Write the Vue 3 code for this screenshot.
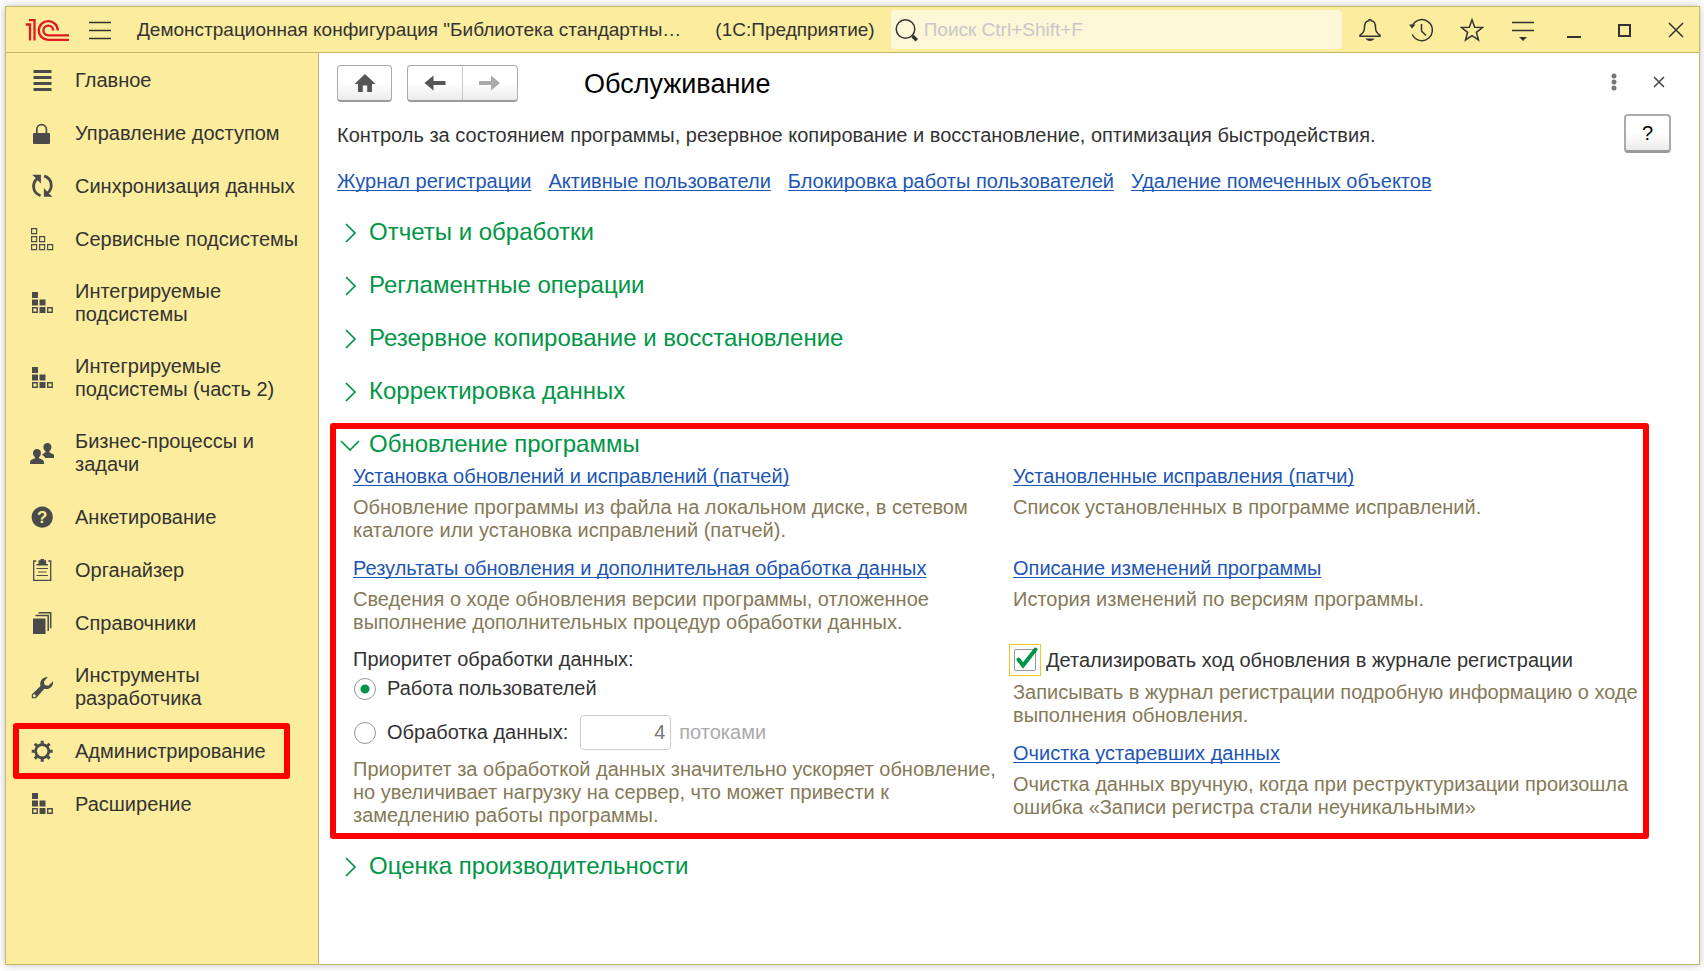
<script setup>
import { ref } from 'vue'

const f = (d) => ({ d, fill: 'currentColor', stroke: 'none', w: 0 })
const s = (d, w) => ({ d, fill: 'none', stroke: 'currentColor', w })

const blocks = [
  f('M2 1h6v6H2zM2 8.5h6v6H2zM9.5 8.5h6v6h-6zM9.5 16h6v6h-6z'),
  s('M2.7 16.7h4.5v4.5H2.7zM17.7 16.7h4.5v4.5h-4.5z', 1.4)
]

const icons = {
  list: [s('M3.5 3.5h18M3.5 9.5h18M3.5 15.5h18M3.5 21.5h18', 3)],
  lock: [f('M4 12h15a1 1 0 0 1 1 1v9a1 1 0 0 1-1 1H4a1 1 0 0 1-1-1v-9a1 1 0 0 1 1-1z'), s('M6.8 12.5V8.500a4.800 4.800 0 0 1 9.600 0v4', 1.7)],
  sync: [
    f('M2.3.8h8.600v8.700L8.200 6.700 5.900 4.200zM22.500 22.800h-8.600v-8.700l2.700 2.800 2.300 2.500z'),
    s('M7.200 4.600C2 9 1.800 18.600 10.600 21.700M17.600 19C22.800 14.600 23 5 14.200 1.900', 2.8)
  ],
  outline: [s('M1.6 1.6h5v5h-5zM1.6 9.6h5v5h-5zM9.6 9.6h5v5h-5zM1.6 17.6h5v5h-5zM9.6 17.6h5v5h-5zM17.6 17.6h5v5h-5z', 1.2)],
  blocks,
  people: [
    f('M17.4 2c2.600 0 4 1.800 4 4 0 2-.9 3.500-2 4.300v1.200l3.600 1.400c1 .4 1.400 1.500 1.400 4.100h-9.400c-.6-1.600-1.600-2.300-3-2.900 .3-.8 1-1.100 3.400-2.500V10.300c-1.100-.8-2-2.300-2-4.300 0-2.200 1.400-4 4-4z'),
    f('M7 8c2.600 0 4 1.800 4 4 0 2-.9 3.300-2 4.100v1.200l3.500 1.400c1 .4 1.500 1.600 1.500 4.300H0c0-2.700.5-3.900 1.500-4.300L5 17.300v-1.200c-1.100-.8-2-2.100-2-4.100 0-2.200 1.400-4 4-4z')
  ],
  question: [f('M12.200 1.500a10.600 10.600 0 1 0 .01 0z')],
  clipboard: [
    s('M6.200 3H3.700v19.400h17V3h-2.500', 1.3),
    f('M8.500 2.200h2V1h3.600v1.200h2V6H18v1.500H6.500V6h2z'),
    s('M6.500 10.500h11.500M8 14h8.500M6.500 17.500h11.500', 1.2)
  ],
  books: [f('M3 7.500h12.500V23H3z'), s('M5.500 4.600h12.700v15.500M8.500 1.700h12.200v15.500', 1.5)],
  wrench: [
    f('M1.800 19.600 10.500 11C9.300 6.500 12 2 17.800 2L14 6.400l.6 3.500 3.800.9 4.600-4.500c.6 5.500-4 8.900-8.700 7.500L6 23.200H1.800zM4.300 19.300a1.500 1.500 0 1 0 .01 0z')
  ],
  gear: [
    s('M12.200 5.600a6.600 6.600 0 1 0 .01 0z', 2.6),
    s('M12.200 1.700v3M12.200 19.700v3M1.700 12.200h3M19.700 12.200h3M4.800 4.800l2.200 2.200M17.400 17.400l2.200 2.200M4.800 19.600l2.200-2.200M17.400 7l2.200-2.200', 3)
  ]
}

const menu = [
  { text: 'Главное', icon: 'list' },
  { text: 'Управление доступом', icon: 'lock' },
  { text: 'Синхронизация данных', icon: 'sync' },
  { text: 'Сервисные подсистемы', icon: 'outline' },
  { text: 'Интегрируемые подсистемы', icon: 'blocks' },
  { text: 'Интегрируемые подсистемы (часть 2)', icon: 'blocks' },
  { text: 'Бизнес-процессы и задачи', icon: 'people' },
  { text: 'Анкетирование', icon: 'question' },
  { text: 'Органайзер', icon: 'clipboard' },
  { text: 'Справочники', icon: 'books' },
  { text: 'Инструменты разработчика', icon: 'wrench' },
  { text: 'Администрирование', icon: 'gear', marked: true },
  { text: 'Расширение', icon: 'blocks' }
]

const links = ['Журнал регистрации', 'Активные пользователи', 'Блокировка работы пользователей', 'Удаление помеченных объектов']
const groups = ['Отчеты и обработки', 'Регламентные операции', 'Резервное копирование и восстановление', 'Корректировка данных']

const search = ref('')
const priority = ref('users')
const threads = ref('4')
const detailed = ref(true)
</script>

<template>
  <div class="window">
    <header class="titlebar">
      <svg class="logo" width="46" height="24" viewBox="0 0 46 24" aria-label="1С">
        <path d="M1.700 6.500H6V22.500M5 2.200h5.500v20.300M33.800 12.500a9.500 9.300 0 1 0-9.500 9.300H45M29.200 12.500a4.900 4.800 0 1 0-4.900 4.800H45" />
      </svg>
      <button class="flat burger" aria-label="Меню">
        <svg width="24" height="24" viewBox="0 0 24 24"><path d="M1 4.500h22M1 12.500h22M1 20.500h22" /></svg>
      </button>
      <div class="caption">Демонстрационная конфигурация "Библиотека стандартны…</div>
      <div class="product">(1С:Предприятие)</div>
      <label class="search">
        <svg width="24" height="24" viewBox="0 0 24 24">
          <circle cx="10.500" cy="11" r="9.300" /><path d="m17.500 18 4.300 4.300" class="handle" />
        </svg>
        <input v-model="search" type="text" placeholder="Поиск Ctrl+Shift+F" aria-label="Поиск" />
      </label>
      <div class="tools">
        <button class="flat" aria-label="Уведомления">
          <svg width="24" height="24" viewBox="0 0 24 24">
            <path d="M12 1.500c-.9 0-1.300.6-1.300 1.300C7.500 3.400 6.500 6 6.500 9.500c0 4-1.500 6-4.500 7.700v1.100h20v-1.100c-3-1.700-4.500-3.700-4.500-7.700 0-3.500-1-6.100-4.200-6.700 0-.7-.4-1.300-1.300-1.300z" />
            <path class="solid" d="M7.500 20.500h9c-.8 1.500-2.600 2.400-4.500 2.400s-3.700-.9-4.500-2.400z" />
          </svg>
        </button>
        <button class="flat" aria-label="История">
          <svg width="24" height="24" viewBox="0 0 24 24">
            <path d="M3 8.500A10.500 10.500 0 1 1 3.300 16.500M12.500 6v7l4.500 4.500" /><path class="solid" d="M0 6.500h6.500L3 10.500z" />
          </svg>
        </button>
        <button class="flat" aria-label="Избранное">
          <svg width="24" height="24" viewBox="0 0 24 24">
            <path d="m12 1.800 2.700 7.400 7.900.3-6.200 4.900 2.100 7.600-6.500-4.300L5.500 22l2.100-7.600L1.400 9.500l7.900-.3z" />
          </svg>
        </button>
        <button class="flat" aria-label="Настройки">
          <svg width="24" height="24" viewBox="0 0 24 24"><path d="M1 4.500h22M1 12.500h22" /><path class="solid" d="M8 19h8l-4 4z" /></svg>
        </button>
        <button class="flat" aria-label="Свернуть">
          <svg width="24" height="24" viewBox="0 0 24 24"><path class="bold" d="M5 19h14" /></svg>
        </button>
        <button class="flat" aria-label="Развернуть">
          <svg width="24" height="24" viewBox="0 0 24 24"><path class="bold" d="M6 7h11v11H6z" /></svg>
        </button>
        <button class="flat" aria-label="Закрыть">
          <svg width="24" height="24" viewBox="0 0 24 24"><path d="m5 5 14 14M19 5 5 19" /></svg>
        </button>
      </div>
    </header>

    <div class="body">
      <nav class="sidebar">
        <a v-for="m in menu" :key="m.text" href="#" class="item" :class="{ marked: m.marked }">
          <svg width="24" height="24" viewBox="0 0 24 24">
            <path v-for="(p, i) in icons[m.icon]" :key="i" :d="p.d" :fill="p.fill" :stroke="p.stroke" :stroke-width="p.w" fill-rule="evenodd" />
            <text v-if="m.icon === 'question'" x="12.200" y="18" text-anchor="middle" class="mark">?</text>
          </svg>
          <span>{{ m.text }}</span>
        </a>
      </nav>

      <main class="page">
        <div class="toolbar">
          <button class="btn home" aria-label="Домой">
            <svg width="24" height="24" viewBox="0 0 24 24"><path d="M12 3 22.500 13H19v8h-4.800v-6.500H9.800V21H5v-8H1.500z" /></svg>
          </button>
          <div class="pair">
            <button aria-label="Назад"><svg width="24" height="24" viewBox="0 0 24 24"><path d="M1.500 12 10.500 4.500v5.500H22.500v4H10.500v5.500z" /></svg></button>
            <button aria-label="Вперед" class="off"><svg width="24" height="24" viewBox="0 0 24 24"><path d="M22 12 13 4.500v5.500H1v4h12v5.500z" /></svg></button>
          </div>
          <h1>Обслуживание</h1>
          <button class="flat more" aria-label="Еще">
            <svg width="24" height="24" viewBox="0 0 24 24"><circle cx="12" cy="6" r="2.500" /><circle cx="12" cy="12" r="2.500" /><circle cx="12" cy="18" r="2.500" /></svg>
          </button>
          <button class="flat shut" aria-label="Закрыть страницу">
            <svg width="24" height="24" viewBox="0 0 24 24"><path d="m7 7 10 10M17 7 7 17" /></svg>
          </button>
        </div>

        <div class="intro">
          <div class="intro-text">
            <p>Контроль за состоянием программы, резервное копирование и восстановление, оптимизация быстродействия.</p>
            <div class="links"><a v-for="l in links" :key="l" href="#" class="link">{{ l }}</a></div>
          </div>
          <button class="btn help">?</button>
        </div>

        <button v-for="g in groups" :key="g" class="group">
          <svg width="20" height="20" viewBox="0 0 20 20"><path d="m6 1 9 9-9 9" /></svg>{{ g }}
        </button>

        <section class="update">
          <button class="group open">
            <svg width="20" height="20" viewBox="0 0 20 20"><path d="m1 6 9 9 9-9" /></svg>Обновление программы
          </button>
          <div class="grid">
            <div class="entry">
              <a href="#" class="link">Установка обновлений и исправлений (патчей)</a>
              <p>Обновление программы из файла на локальном диске, в сетевом каталоге или установка исправлений (патчей).</p>
            </div>
            <div class="entry">
              <a href="#" class="link">Установленные исправления (патчи)</a>
              <p>Список установленных в программе исправлений.</p>
            </div>
            <div class="entry">
              <a href="#" class="link">Результаты обновления и дополнительная обработка данных</a>
              <p>Сведения о ходе обновления версии программы, отложенное выполнение дополнительных процедур обработки данных.</p>
            </div>
            <div class="entry">
              <a href="#" class="link">Описание изменений программы</a>
              <p>История изменений по версиям программы.</p>
            </div>
            <div class="priority" role="radiogroup" aria-labelledby="prio">
              <div id="prio">Приоритет обработки данных:</div>
              <label class="radio first"><input v-model="priority" type="radio" value="users" />Работа пользователей</label>
              <div class="threads">
                <label class="radio"><input v-model="priority" type="radio" value="data" />Обработка данных:</label>
                <input id="threads" v-model="threads" type="text" class="count" disabled />
                <label for="threads" class="unit">потоками</label>
              </div>
              <p>Приоритет за обработкой данных значительно ускоряет обновление, но увеличивает нагрузку на сервер, что может привести к замедлению работы программы.</p>
            </div>
            <div class="details">
              <label class="check">
                <span class="tick">
                  <input v-model="detailed" type="checkbox" />
                  <svg v-if="detailed" width="30" height="30" viewBox="0 0 30 30"><path d="M8.500 14.500 13 20.500 25.500 4.500" /></svg>
                </span>
                Детализировать ход обновления в журнале регистрации
              </label>
              <p>Записывать в журнал регистрации подробную информацию о ходе выполнения обновления.</p>
              <div class="entry">
                <a href="#" class="link">Очистка устаревших данных</a>
                <p>Очистка данных вручную, когда при реструктуризации произошла ошибка «Записи регистра стали неуникальными»</p>
              </div>
            </div>
          </div>
        </section>

        <button class="group">
          <svg width="20" height="20" viewBox="0 0 20 20"><path d="m6 1 9 9-9 9" /></svg>Оценка производительности
        </button>
      </main>
    </div>
  </div>
</template>

<style>
body {
  background: #fff;
}
#app {
  display: flex;
  min-height: 100vh;
}
</style>

<style scoped>
* {
  box-sizing: border-box;
}
.window {
  flex: 1;
  min-width: 0;
  margin: 6px 4px 6px 5px;
  display: flex;
  flex-direction: column;
  border: 1px solid #c6b764;
  background: #fff;
  box-shadow: 0 0 8px rgba(0, 0, 0, 0.25);
  font: 20px/23px "Liberation Sans", Arial, sans-serif;
  color: #333;
}
button,
input {
  font: inherit;
  color: inherit;
  margin: 0;
}
p,
h1 {
  margin: 0;
}
svg {
  display: block;
  flex: none;
}
.flat {
  border: 0;
  padding: 0;
  background: none;
}
.titlebar {
  display: flex;
  align-items: center;
  height: 46px;
  padding: 0 11px 0 18px;
  background: #fbec9e;
  border-bottom: 1px solid #c6b764;
  font-size: 19px;
}
.titlebar svg {
  fill: none;
  stroke: #333;
  stroke-width: 1.500;
}
.titlebar .logo {
  stroke: #df1a22;
  stroke-width: 2.300;
}
.titlebar .solid {
  fill: #333;
  stroke: none;
}
.titlebar .bold {
  stroke-width: 2;
}
.burger {
  margin: 0 25px 0 18px;
}
.product {
  margin: 0 16px 0 34px;
}
.caption,
.product {
  white-space: nowrap;
}
.search {
  flex: 1;
  min-width: 0;
  display: flex;
  align-items: center;
  gap: 5px;
  height: 39px;
  padding: 0 4px;
  border-radius: 4px;
  background: #fdf6d7;
}
.search .handle {
  stroke-width: 3.500;
}
.search input {
  flex: 1;
  min-width: 0;
  border: 0;
  padding: 0;
  background: none;
  outline: 0;
}
.search input::placeholder {
  color: #c8c8c8;
  opacity: 1;
}
.tools {
  display: flex;
  gap: 27px;
  margin-left: 16px;
}
.body {
  flex: 1;
  display: flex;
}
.sidebar {
  flex: none;
  width: 313px;
  padding-top: 1px;
  background: #fbec9e;
  border-right: 1px solid #c6b764;
}
.item {
  position: relative;
  display: flex;
  align-items: center;
  gap: 21px;
  min-height: 53px;
  padding: 14px 14px 15px 24px;
  color: #333;
  text-decoration: none;
}
.item svg {
  color: #4a4a4a;
}
.mark {
  font-size: 17px;
  font-weight: bold;
  fill: #fbec9e;
}
.marked::after {
  content: "";
  position: absolute;
  inset: -2px 28px -1px 7px;
  border: 6px solid #f00;
  border-radius: 3px;
}
.page {
  flex: 1;
  min-width: 0;
  padding: 12px 28px 24px 18px;
}
.toolbar {
  display: flex;
  align-items: center;
}
.btn,
.pair {
  display: flex;
  align-items: center;
  justify-content: center;
  border: 1px solid #ababab;
  border-bottom: 2px solid #9a9a9a;
  border-radius: 4px;
  padding: 0;
  background: linear-gradient(#fff 50%, #ebebeb);
}
.home {
  width: 55px;
  height: 37px;
}
.pair {
  width: 111px;
  height: 37px;
  margin-left: 15px;
  align-items: stretch;
}
.pair button {
  flex: 1;
  display: flex;
  align-items: center;
  justify-content: center;
  border: 0;
  padding: 0;
  background: none;
}
.pair .off {
  border-left: 1px solid #c8c8c8;
}
.toolbar svg {
  fill: #555;
}
.toolbar .off svg {
  fill: #aaa;
}
h1 {
  flex: 1;
  margin-left: 66px;
  font-size: 27px;
  font-weight: normal;
  line-height: 32px;
  color: #000;
}
.toolbar .flat {
  margin-bottom: 3px;
}
.toolbar .more svg {
  fill: #777;
}
.toolbar .shut {
  margin-left: 21px;
}
.toolbar .shut svg {
  stroke: #444;
  stroke-width: 1.500;
}
.intro {
  display: flex;
  justify-content: space-between;
  align-items: flex-start;
  padding-top: 12px;
}
.intro-text {
  padding-top: 10px;
}
.help {
  width: 47px;
  height: 39px;
  border-width: 2px;
  border-bottom-width: 3px;
  color: #000;
}
.links {
  display: flex;
  gap: 17px;
  margin: 23px 0 12px;
}
.link {
  color: #1d56b5;
  text-decoration: underline;
  text-decoration-thickness: 1px;
  text-underline-offset: 2px;
  text-decoration-skip-ink: none;
}
.group {
  display: flex;
  align-items: center;
  gap: 9px;
  height: 53px;
  padding: 0 0 0 3px;
  border: 0;
  background: none;
  font-size: 24px;
  line-height: 27px;
  color: #009646;
}
.group svg {
  margin-top: 2px;
  fill: none;
  stroke: #009646;
  stroke-width: 1.700;
}
.update {
  position: relative;
}
.update::after {
  content: "";
  position: absolute;
  inset: 6px 22px 0 -7px;
  border: 6px solid #f00;
  border-radius: 3px;
  pointer-events: none;
}
.grid {
  display: grid;
  grid-template-columns: 1fr 1fr;
  gap: 15px 16px;
  margin-top: -5px;
  padding: 0 14px 12px 16px;
}
.entry {
  display: flex;
  flex-direction: column;
  align-items: flex-start;
  gap: 8px;
}
.grid p {
  color: #857a57;
}
.priority {
  margin-top: -1px;
}
.radio {
  display: flex;
  align-items: center;
  gap: 11px;
}
.first {
  margin: 6px 0 15px;
}
.radio input {
  appearance: none;
  flex: none;
  width: 22px;
  height: 22px;
  margin-left: 1px;
  border: 1px solid #999;
  border-radius: 50%;
  background: #fff;
}
.radio input:checked {
  background: radial-gradient(circle, #009646 4px, #fff 5px);
}
.threads {
  display: flex;
  align-items: center;
  margin-bottom: 8px;
}
.count {
  width: 91px;
  height: 35px;
  margin: 0 8px 0 12px;
  padding: 0 5px;
  border: 1px solid #ccc;
  border-radius: 4px;
  background: #fff;
  text-align: right;
  color: #777;
}
.unit {
  color: #aaa;
}
.details {
  margin-top: -5px;
}
.check {
  display: flex;
  align-items: center;
  gap: 5px;
  margin: 0 0 5px -4px;
}
.tick {
  position: relative;
  display: flex;
  align-items: center;
  justify-content: center;
  width: 32px;
  height: 32px;
  border: 1px solid #f7c81e;
}
.tick input {
  appearance: none;
  width: 22px;
  height: 22px;
  border: 1px solid #999;
  border-radius: 2px;
}
.tick svg {
  position: absolute;
  inset: 0;
  fill: none;
  stroke: #009646;
  stroke-width: 4;
  stroke-linecap: round;
  pointer-events: none;
}
.details .entry {
  margin-top: 15px;
}
</style>
